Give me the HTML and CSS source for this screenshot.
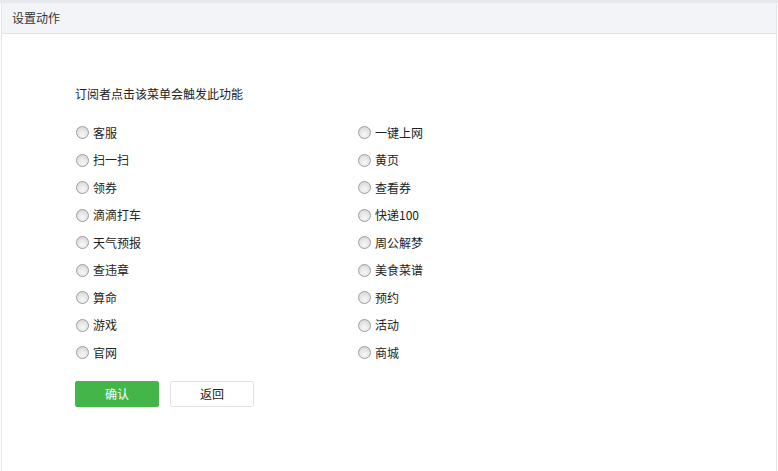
FILE: index.html
```html
<!DOCTYPE html>
<html lang="zh-CN">
<head>
<meta charset="utf-8">
<title>设置动作</title>
<link rel="stylesheet" href="styles.css">
</head>
<body>
<div class="topstrip"></div>
<div class="panel">
  <div class="panel-head">设置动作</div>
  <div class="panel-body">
    <p class="intro">订阅者点击该菜单会触发此功能</p>
    <div class="options">
      <label class="opt"><span class="radio"></span>客服</label>
      <label class="opt"><span class="radio"></span>一键上网</label>
      <label class="opt"><span class="radio"></span>扫一扫</label>
      <label class="opt"><span class="radio"></span>黄页</label>
      <label class="opt"><span class="radio"></span>领券</label>
      <label class="opt"><span class="radio"></span>查看券</label>
      <label class="opt"><span class="radio"></span>滴滴打车</label>
      <label class="opt"><span class="radio"></span>快递100</label>
      <label class="opt"><span class="radio"></span>天气预报</label>
      <label class="opt"><span class="radio"></span>周公解梦</label>
      <label class="opt"><span class="radio"></span>查违章</label>
      <label class="opt"><span class="radio"></span>美食菜谱</label>
      <label class="opt"><span class="radio"></span>算命</label>
      <label class="opt"><span class="radio"></span>预约</label>
      <label class="opt"><span class="radio"></span>游戏</label>
      <label class="opt"><span class="radio"></span>活动</label>
      <label class="opt"><span class="radio"></span>官网</label>
      <label class="opt"><span class="radio"></span>商城</label>
    </div>
    <div class="actions">
      <button class="btn btn-primary">确认</button>
      <button class="btn btn-default">返回</button>
    </div>
  </div>
</div>
</body>
</html>
```

FILE: styles.css
```css
html, body {
  margin: 0;
  padding: 0;
  background: #fff;
}
body {
  font-family: "Noto Sans CJK SC", "Liberation Sans", sans-serif;
  font-size: 12px;
  color: #222;
  width: 778px;
  height: 471px;
  overflow: hidden;
}
.topstrip {
  height: 3px;
  background: #e7e8ec;
}
.panel {
  margin-left: 1px;
  width: 774px;
  height: 468px;
  border-left: 1px solid #e4e5e9;
  border-right: 1px solid #e4e5e9;
  box-sizing: content-box;
}
.panel-head {
  height: 30px;
  line-height: 30px;
  background: #f3f4f8;
  border-bottom: 1px solid #e2e3e8;
  padding-left: 10px;
  color: #333;
}
.panel-body {
  padding: 50px 0 0 73px;
}
.intro {
  margin: 0;
  line-height: 20px;
}
.options {
  display: grid;
  grid-template-columns: 282px 282px;
  grid-auto-rows: 27.5px;
  margin-top: 15px;
}
.opt {
  display: flex;
  align-items: center;
  gap: 4px;
  line-height: 20px;
  color: #222;
}
.radio {
  display: inline-block;
  width: 11px;
  height: 11px;
  border-radius: 50%;
  border: 1px solid #9d9d9d;
  background: radial-gradient(circle at 50% 70%, #f8f8f8 0%, #e4e4e4 55%, #cfcfcf 100%);
  margin-left: 1px;
}
.actions {
  display: flex;
  gap: 11px;
  margin-top: 14px;
}
.btn {
  width: 84px;
  height: 26px;
  border-radius: 2px;
  font-family: "Noto Sans CJK SC", "Liberation Sans", sans-serif;
  font-size: 12px;
  padding: 0;
  cursor: pointer;
}
.btn-primary {
  background: #44b549;
  border: 1px solid #44b549;
  color: #fff;
}
.btn-default {
  background: #fff;
  border: 1px solid #e2e2e2;
  color: #222;
}
```
